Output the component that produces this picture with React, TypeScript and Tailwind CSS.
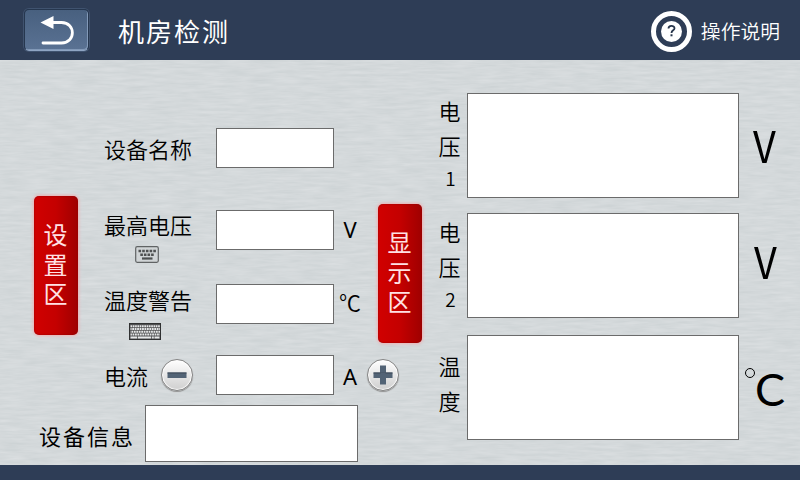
import React from "react";

const sans = "font-['Noto_Sans_CJK_SC','Noto_Sans',sans-serif]";

function Field({ size }: { size: string }) {
  return <div className={`shrink-0 border border-[#6b6b6b] bg-white ${size}`} />;
}

function BrushedMetal() {
  return (
    <svg className="absolute inset-0 h-full w-full" aria-hidden="true">
      <filter id="brushed" x="0" y="0" width="100%" height="100%" colorInterpolationFilters="sRGB">
        <feTurbulence type="fractalNoise" baseFrequency="0.04 0.35" numOctaves="3" seed="4" />
        <feColorMatrix values="0.07 0 0 0 0.795  0.06 0 0 0 0.819  0.06 0 0 0 0.827  0 0 0 0 1" />
      </filter>
      <rect width="100%" height="100%" filter="url(#brushed)" />
    </svg>
  );
}

function BackButton() {
  return (
    <div className="flex h-[42px] w-[65px] items-center justify-center rounded-[5px] border border-[#26374f] border-b-[#8fa5c3] bg-linear-to-b from-[#48607f] to-[#5a7293] shadow-[0_0_0_1px_#40536f,inset_-1px_-1px_0_#8299b8]">
      <svg width="40" height="34" viewBox="0 0 40 34">
        <path d="M14 9.500H24.500C39 9.500 39 30 24.500 30H6" fill="none" stroke="#fff" strokeWidth="2.800" strokeLinecap="round" />
        <path d="M3.500 9.500L16.500 3V16Z" fill="#fff" />
      </svg>
    </div>
  );
}

function HelpIcon() {
  return (
    <div className="flex size-[41px] items-center justify-center rounded-full border-[5px] border-white">
      <div className="flex size-[21px] items-center justify-center rounded-full bg-white">
        <svg width="11" height="14" viewBox="0 0 11 14">
          <path d="M2.500 4.500C2.500 1 8.500 1 8.500 4.200C8.500 6.400 5.500 6.200 5.500 9" fill="none" stroke="#26354b" strokeWidth="1.800" />
          <rect x="4.500" y="10.300" width="2" height="2" fill="#26354b" />
        </svg>
      </div>
    </div>
  );
}

function RedTab({ label }: { label: string }) {
  return (
    <div className="flex h-[139px] w-[44px] items-center justify-center rounded-[5px] bg-linear-to-r from-[#d10000] via-[#c40000] to-[#9f0000] pr-[2px] text-[24px] leading-[36px] tracking-[5.5px] text-[#ffe1e4] shadow-[0_0_3px_1px_#efb0b4,inset_0_0_2px_#8d0000]">
      <span className="pt-[3px] [writing-mode:vertical-rl]">{label}</span>
    </div>
  );
}

function Keypad() {
  return (
    <svg width="24" height="17" viewBox="0 0 24 17">
      <rect x="0.700" y="0.700" width="22.600" height="15.600" rx="1.500" fill="#d0d4d6" stroke="#606364" strokeWidth="1.200" />
      <path d="M3.500 5H21" stroke="#4e5051" strokeWidth="2.500" strokeDasharray="2.600 1.100" />
      <path d="M5.300 8.700H19" stroke="#4e5051" strokeWidth="2.500" strokeDasharray="2.600 1" />
      <path d="M7 12.500H17.500" stroke="#4e5051" strokeWidth="2.200" />
    </svg>
  );
}

function Keyboard() {
  return (
    <svg width="32" height="17" viewBox="0 0 32 17">
      <rect x="0.500" y="0.500" width="31" height="16" fill="#505152" stroke="#303132" />
      <g stroke="#e6e8e9" strokeWidth="2">
        <path d="M1.500 3.200H31" strokeDasharray="1.700 0.600" />
        <path d="M1.500 6H31" strokeDasharray="1.800 0.650" strokeDashoffset="0.700" />
        <path d="M1.500 8.800H31" strokeDasharray="1.800 0.650" strokeDashoffset="1.500" />
        <path d="M1.500 11.600H31" strokeDasharray="1.800 0.650" strokeDashoffset="0.400" />
        <path d="M1.500 14.500H8M8.800 14.500H22M22.800 14.500H24.800M25.500 14.500H30.500" />
      </g>
    </svg>
  );
}

function RoundButton({ plus }: { plus?: boolean }) {
  return (
    <div className="flex size-8 items-center justify-center rounded-full border border-[#858585] bg-linear-to-b from-white to-[#cfcfcf] shadow-[0_1px_1px_#909090,inset_0_0_1px_1px_#ffffff]">
      <svg width="20" height="20" viewBox="0 0 20 20" fill="#526375">
        <rect x="0.500" y="7.500" width="19" height="5.500" />
        {plus && <rect x="7" y="0.500" width="6" height="19" />}
        <path d="M0.500 8H19.500" stroke="#3d4956" />
        {plus && <path d="M7.500 8.500H12.500" stroke="#526375" strokeWidth="2" />}
      </svg>
    </div>
  );
}

function Reading({ chars, unit, offset, gap }: { chars: string[]; unit: React.ReactNode; offset: string; gap: string }) {
  return (
    <div className={`flex h-[105px] ${gap}`}>
      <div className={`flex w-[37px] flex-col items-center pl-[2px] text-[22px] leading-[35px] font-[350] ${offset}`}>
        {chars.map((c) => (
          <span key={c} className={/\d/.test(c) ? "pl-[2px] text-[19px] leading-[30px]" : ""}>{c}</span>
        ))}
      </div>
      <Field size="h-[105px] w-[272px]" />
      {unit}
    </div>
  );
}

function Volt({ offset }: { offset: string }) {
  return (
    <span className={`text-[44px] leading-[64px] ${offset}`}>
      <span className="inline-block origin-left scale-x-[0.9]">V</span>
    </span>
  );
}

export default function App() {
  return (
    <div className={`flex h-[480px] w-[800px] flex-col overflow-hidden text-black ${sans}`}>
      <header className="flex h-[60px] items-center bg-[#2e3d56] pl-[24px] text-white">
        <BackButton />
        <h1 className="ml-[29px] pt-px text-[26px] leading-[40px] tracking-[2px]">机房检测</h1>
        <div className="mr-[20px] ml-auto flex items-center gap-[9px] pt-[2px]">
          <HelpIcon />
          <span className="pb-px text-[19.800px] leading-[30px] font-[350]">操作说明</span>
        </div>
      </header>

      <main className="relative h-[405px] bg-[#d3d8da]">
        <BrushedMetal />
        <div className="relative flex h-full">
          <div className="w-[430px]">
            <div className="flex h-[345px]">
              <div className="w-[104px] pt-[136px] pl-[34px]">
                <RedTab label="设置区" />
              </div>

              <div className="w-[262px] pt-[68px] text-[22px] leading-[32px] font-[350]">
                <div className="flex h-[82px]">
                  <span className="w-[112px] pt-[4px]">设备名称</span>
                  <Field size="h-[40px] w-[118px]" />
                </div>
                <div className="flex h-[74px]">
                  <div className="w-[112px]">
                    <div className="-mt-[2px] h-[38px]">最高电压</div>
                    <div className="ml-[31px]"><Keypad /></div>
                  </div>
                  <Field size="h-[40px] w-[118px]" />
                  <span className="w-[32px] pt-[3px] text-center font-['Noto_Sans',sans-serif] font-normal">V</span>
                </div>
                <div className="flex h-[71px]">
                  <div className="w-[112px]">
                    <div className="-mt-px h-[40px]">温度警告</div>
                    <div className="ml-[25px]"><Keyboard /></div>
                  </div>
                  <Field size="h-[40px] w-[118px]" />
                  <span className="w-[32px] pt-px pl-[5px]">℃</span>
                </div>
                <div className="flex h-[50px]">
                  <div className="flex w-[112px] gap-[13px] pt-[4px]">
                    <span className="w-[44px]">电流</span>
                    <div><RoundButton /></div>
                  </div>
                  <Field size="h-[40px] w-[118px]" />
                  <span className="w-[32px] pt-[5px] text-center font-['Noto_Sans',sans-serif] font-normal">A</span>
                </div>
              </div>

              <div className="flex w-[64px] flex-col pt-[144px]">
                <div className="pl-[12px]"><RedTab label="显示区" /></div>
                <div className="mt-[16px] pl-px"><RoundButton plus /></div>
              </div>
            </div>

            <div className="flex items-center pl-[39px]">
              <span className="w-[106px] pt-[3px] text-[22px] leading-[32px] tracking-[2px]">设备信息</span>
              <Field size="h-[57px] w-[213px]" />
            </div>
          </div>

          <div className="w-[370px] pt-[33px]">
            <Reading chars={["电", "压", "1"]} offset="pt-0" gap="mb-[15px]" unit={<Volt offset="pt-[19px] pl-[14px]" />} />
            <Reading chars={["电", "压", "2"]} offset="pt-px" gap="mb-[17px]" unit={<Volt offset="pt-[15px] pl-[15px]" />} />
            <Reading
              chars={["温", "度"]}
              offset="pt-[13px]"
              gap=""
              unit={
                <div className="flex pt-[22px] pl-[4px]">
                  <span className="mt-[11px] ml-[2px] size-[10px] rounded-full border-[1.5px] border-black" />
                  <span className="font-[Lato,sans-serif] text-[45px] leading-[64px]">C</span>
                </div>
              }
            />
          </div>
        </div>
      </main>
      <footer className="h-[15px] bg-[#2e3d56]" />
    </div>
  );
}
